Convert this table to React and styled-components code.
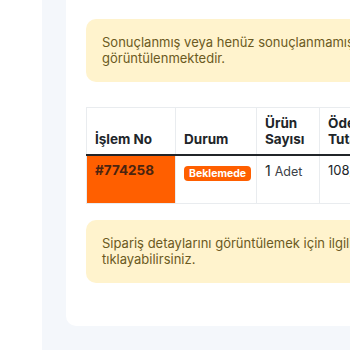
import React from "react";
import styled, { createGlobalStyle } from "styled-components";

const GlobalStyle = createGlobalStyle`
  html, body {
    margin: 0;
    padding: 0;
    background: #ffffff;
    font-family: Inter, "Noto Sans", sans-serif;
    overflow: hidden;
  }
`;

const Page = styled.div`
  width: 350px;
  height: 350px;
  padding-left: 42px;
  box-sizing: border-box;
  overflow: hidden;
`;

const Panel = styled.div`
  background: #f4f7fb;
  height: 100%;
  padding: 0 0 0 24px;
  box-sizing: border-box;
`;

const Card = styled.div`
  background: #ffffff;
  border-radius: 0 0 0 10px;
  padding: 19px 0 43px 20px;
  width: 560px;
  box-sizing: border-box;
`;

const Alert = styled.div`
  background: #fff3cd;
  color: #6b5a22;
  border-radius: 10px;
  padding: 15px 16px 16px;
  font-size: 13px;
  line-height: 16px;
  width: 520px;
  box-sizing: border-box;
`;

const Table = styled.table`
  border-collapse: collapse;
  margin: 25px 0 16px;
  color: #212529;
  font-size: 13px;
  table-layout: fixed;
  width: 400px;
`;

const Th = styled.th`
  box-sizing: border-box;
  width: ${(p) => p.w}px;
  text-align: left;
  vertical-align: bottom;
  font-weight: 700;
  font-size: 13.5px;
  line-height: 16px;
  padding: 7px 8px 7px 8px;
  border: 1px solid #e9ecef;
  border-bottom: 2px solid #212529;
  white-space: nowrap;
`;

const Td = styled.td`
  box-sizing: border-box;
  vertical-align: top;
  padding: 6px 8px 0;
  height: 48px;
  border: 1px solid #e9ecef;
  background: ${(p) => (p.$hot ? "#ff5f00" : "transparent")};
  white-space: nowrap;
`;

const OrderNo = styled.span`
  font-weight: 700;
  font-size: 13.5px;
  color: #4a2410;
`;

const Badge = styled.span`
  display: inline-block;
  background: #ff5f00;
  color: #ffffff;
  font-size: 10.5px;
  font-weight: 700;
  line-height: 15px;
  padding: 0 5px;
  border-radius: 4px;
  margin-top: 4px;
`;

const Count = styled.span`
  font-size: 14px;
  color: #212529;

  small {
    font-size: 12.5px;
    color: #3d4248;
  }
`;

export default function App() {
  return (
    <>
      <GlobalStyle />
      <Page>
        <Panel>
          <Card>
            <Alert>
              Sonuçlanmış veya henüz sonuçlanmamış siparişleriniz burada
              görüntülenmektedir.
            </Alert>
            <Table>
              <thead>
                <tr>
                  <Th w={89}>İşlem No</Th>
                  <Th w={81}>Durum</Th>
                  <Th w={63}>
                    Ürün
                    <br />
                    Sayısı
                  </Th>
                  <Th w={167}>
                    Ödeme
                    <br />
                    Tutarı
                  </Th>
                </tr>
              </thead>
              <tbody>
                <tr>
                  <Td $hot>
                    <OrderNo>#774258</OrderNo>
                  </Td>
                  <Td>
                    <Badge>Beklemede</Badge>
                  </Td>
                  <Td>
                    <Count>
                      1 <small>Adet</small>
                    </Count>
                  </Td>
                  <Td>108,90 TL</Td>
                </tr>
              </tbody>
            </Table>
            <Alert>
              Sipariş detaylarını görüntülemek için ilgili siparişin
              <br />
              tıklayabilirsiniz.
            </Alert>
          </Card>
        </Panel>
      </Page>
    </>
  );
}
